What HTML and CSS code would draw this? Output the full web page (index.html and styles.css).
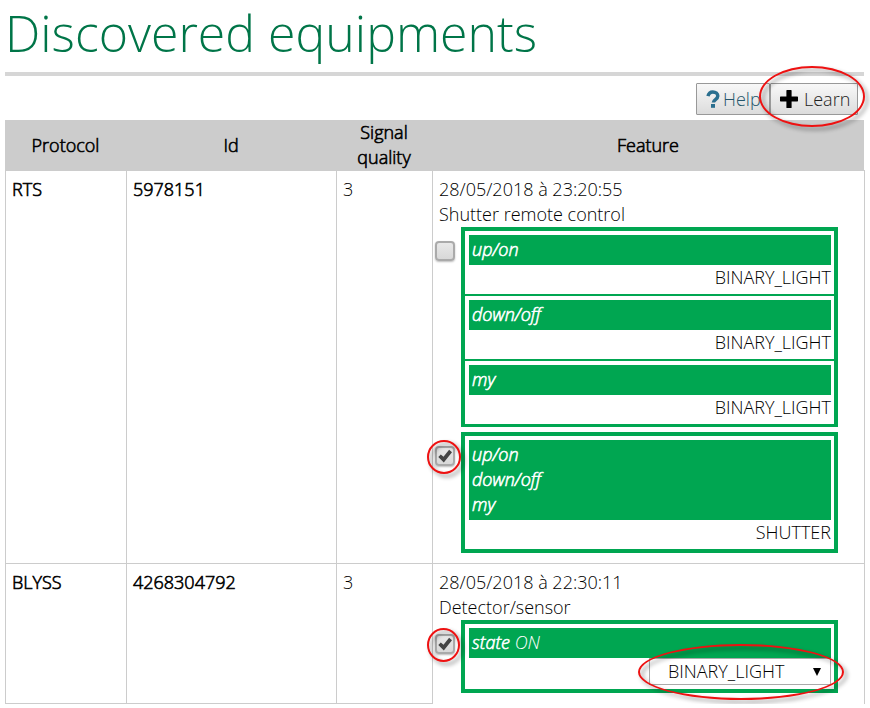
FILE: index.html
```
<!DOCTYPE html>
<html lang="en">
<head>
<meta charset="utf-8">
<title>Discovered equipments</title>
<link rel="stylesheet" href="styles.css">
</head>
<body>
<main class="page">
  <h1 class="title"><span class="t">Discovered equipments</span></h1>
  <div class="toolbar">
    <button class="btn btn-help"><svg width="14" height="18" viewBox="0 0 14 18"><path d="M2 6.2C2.6 3.5 4.2 2 6.8 2c3 0 5 1.700 5 4.100 0 3.400-4.400 3.500-4.400 6.400" fill="none" stroke="#2a6f8f" stroke-width="3.500"/><path d="M5 14h4v3.800H5z" fill="#2a6f8f"/></svg><span class="t">Help</span></button>
    <button class="btn btn-learn"><svg width="18" height="18" viewBox="0 0 18 18"><path d="M7 0h4q.6 0 .6.600V6.600h5.800q.6 0 .6.600v3.600q0 .6-.6.600h-5.800v6q0 .6-.6.600H7q-.6 0-.6-.6v-6H.6q-.6 0-.6-.6V7.200q0-.6.6-.6h5.800V.6Q6.400 0 7 0z"/></svg><span class="t">Learn</span></button>
    <i class="ring ring-learn"></i>
  </div>
  <div class="row head">
    <div><span class="t">Protocol</span></div>
    <div><span class="t">Id</span></div>
    <div><span class="t">Signal</span><br><span class="t">quality</span></div>
    <div><span class="t">Feature</span></div>
  </div>
  <div class="row body rts">
    <div class="strong"><span class="t">RTS</span></div>
    <div class="strong"><span class="t">5978151</span></div>
    <div><span class="t">3</span></div>
    <div class="feature">
      <span class="t">28/05/2018 à 23:20:55</span><br><span class="t">Shutter remote control</span>
      <div class="option">
        <span class="check"></span>
        <div class="box multi">
          <div class="item"><div class="bar">up/on</div><div class="kind">BINARY_LIGHT</div></div>
          <div class="item"><div class="bar">down/off</div><div class="kind">BINARY_LIGHT</div></div>
          <div class="item"><div class="bar">my</div><div class="kind">BINARY_LIGHT</div></div>
        </div>
      </div>
      <div class="option second">
        <span class="check"><svg width="20" height="20" viewBox="0 0 20 20"><path d="M3.300 11l2.500-2.500 2.700 2.300 5.600-7L17 6.200 8.800 16.600z" fill="#444"/></svg><i class="ring ring-a"></i></span>
        <div class="box">
          <div class="item"><div class="bar">up/on<br>down/off<br>my</div><div class="kind">SHUTTER</div></div>
        </div>
      </div>
    </div>
  </div>
  <div class="row body blyss">
    <div class="strong"><span class="t">BLYSS</span></div>
    <div class="strong"><span class="t">4268304792</span></div>
    <div><span class="t">3</span></div>
    <div class="feature">
      <span class="t">28/05/2018 à 22:30:11</span><br><span class="t">Detector/sensor</span>
      <div class="option">
        <span class="check"><svg width="20" height="20" viewBox="0 0 20 20"><path d="M3.300 11l2.500-2.500 2.700 2.300 5.600-7L17 6.200 8.800 16.600z" fill="#444"/></svg><i class="ring ring-b"></i></span>
        <div class="box">
          <div class="item"><div class="bar">state <span class="value">ON</span></div>
          <div class="select"><span class="t">BINARY_LIGHT</span><svg width="8" height="8" viewBox="0 0 8 8"><path d="M0 0h8L4 8z"/></svg><i class="ring ring-select"></i></div></div>
        </div>
      </div>
    </div>
  </div>
</main>
</body>
</html>
```
FILE: styles.css
```
* { box-sizing: border-box; }
body { margin: 0; background: #fff; overflow: hidden; }
.page {
  width: 860px;
  margin-left: 5px;
  font: 300 18px/25px "Open Sans", sans-serif;
  color: #000;
}
.title {
  margin: 0;
  width: 859px;
  height: 76px;
  border-bottom: 4px solid #d6d6d6;
  font-size: 50px;
  font-weight: 300;
  line-height: 66px;
  color: #007548;
}
.toolbar {
  position: relative;
  display: flex;
  width: 853px;
  height: 44px;
  padding-top: 7px;
  justify-content: flex-end;
}
.btn {
  display: flex;
  align-items: center;
  height: 32px;
  padding: 0 9px;
  border: 1px solid #999;
  border-radius: 1px;
  background: linear-gradient(#f8f8f8, #dcdcdc);
  font: inherit;
  color: #222;
}
.btn-help { width: 74px; gap: 3px; color: #24566b; }
.btn-learn { width: 88px; gap: 6px; }
.btn svg { flex: none; }
.row { display: grid; grid-template-columns: 121px 210px 96px 433px; }
.head {
  width: 859px;
  height: 50px;
  background: #ccc;
  text-align: center;
  align-items: center;
  grid-template-columns: 121px 210px 96px 432px;
}
.head, .strong, .bar { -webkit-text-stroke: 0.6px currentColor; }
.body > div { border-left: 1px solid #ccc; border-top: 1px solid #ccc; padding: 6px 0 0 6px; }
.body > .feature { border-right: 1px solid #ccc; }
.rts { height: 393px; }
.blyss { height: 141px; }
.blyss > div { border-bottom: 1px solid #ccc; }
.blyss > .feature { margin-bottom: -1px; }
.option { display: flex; margin: 0 0 0 -4px; }
.second { margin-top: 5px; }
.check {
  position: relative;
  flex: none;
  width: 20px;
  height: 20px;
  margin: 14px 6px 0 0;
  border: 2px solid #aaa;
  border-radius: 4px;
  background: linear-gradient(#e8e8e8, #d8d8d8);
  box-shadow: 0 1px 2px #bbb;
}
.check svg { display: block; margin: -2px; }
.box { width: 377px; border: 4px solid #00a651; }
.multi { border-bottom-width: 3px; }
.item { padding: 4px 3px 4px 4px; }
.item + .item { border-top: 2px solid #00a651; }
.item + .item { padding-top: 4px; }
.bar { padding: 2px 3px 3px; background: #00a651; color: #fff; font-style: italic; }
.value { -webkit-text-stroke: 0; }
.kind { text-align: right; }
.select {
  position: relative;
  display: flex;
  align-items: center;
  justify-content: space-between;
  width: 182px;
  height: 27px;
  margin-left: auto;
  padding: 0 9px 0 18px;
  border: 1px solid #aaa;
}
.ring {
  position: absolute;
  border: 2px solid #ee1111;
  border-radius: 50%;
  filter: drop-shadow(3px 3px 2px rgba(0, 0, 0, .45));
}
.ring-learn { left: 754px; top: -10px; width: 106px; height: 61px; z-index: 1; }
.ring-a { left: -10px; top: -8px; width: 34px; height: 34px; }
.ring-b { left: -10px; top: -8px; width: 33px; height: 34px; }
.ring-select { left: -12px; top: -15px; width: 206px; height: 56px; }
```
